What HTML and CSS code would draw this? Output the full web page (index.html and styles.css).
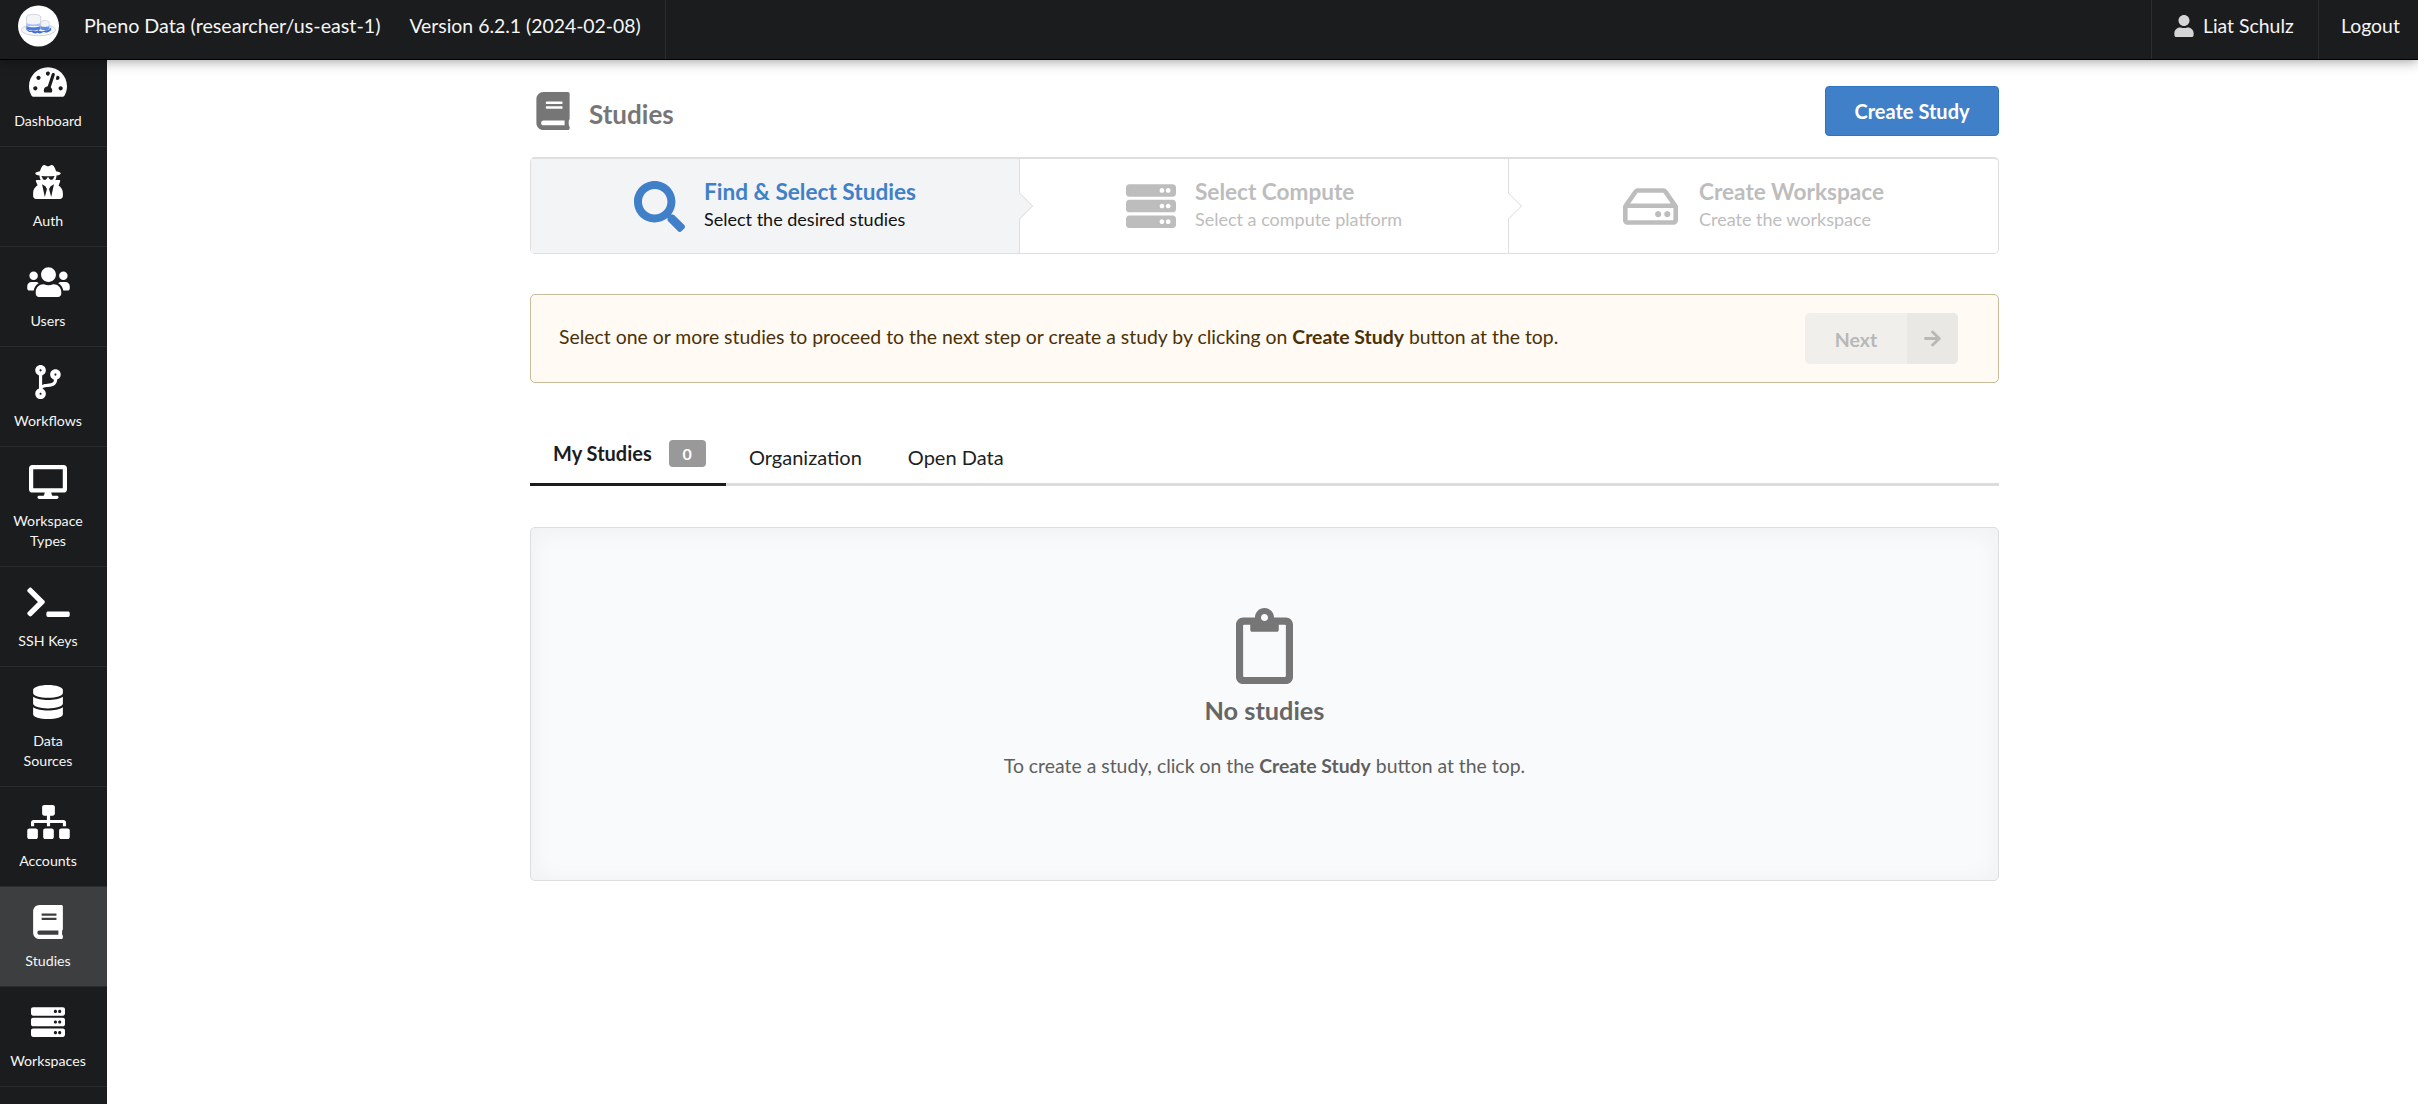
FILE: index.html
```html
<!DOCTYPE html>
<html>
<head>
	<title>Studies</title>
	<link rel="stylesheet" href="styles.css">
</head>
<body>
	<svg class="icon-defs" xmlns="http://www.w3.org/2000/svg">
		<symbol id="i-dashboard" viewBox="0 0 576 512"><path d="M288 32C128.94 32 0 160.94 0 320c0 52.8 14.25 102.26 39.06 144.8 5.61 9.62 16.3 15.2 27.44 15.2h443c11.14 0 21.83-5.58 27.44-15.2C561.75 422.26 576 372.8 576 320c0-159.06-128.94-288-288-288zm0 64c14.71 0 26.58 10.13 30.32 23.65-1.11 2.26-2.64 4.23-3.45 6.67l-9.22 27.67c-5.13 3.49-10.97 6.01-17.64 6.01-17.67 0-32-14.33-32-32S270.33 96 288 96zM96 384c-17.67 0-32-14.33-32-32s14.33-32 32-32 32 14.33 32 32-14.33 32-32 32zm48-160c-17.67 0-32-14.33-32-32s14.33-32 32-32 32 14.33 32 32-14.33 32-32 32zm246.77-72.41l-61.33 184C343.13 347.33 352 364.54 352 384c0 11.72-3.38 22.55-8.88 32H232.88c-5.5-9.45-8.88-20.28-8.88-32 0-33.94 26.5-61.43 59.9-63.59l61.34-184.01c4.17-12.56 17.73-19.45 30.36-15.17 12.57 4.19 19.35 17.79 15.17 30.36zm14.66 57.2l15.52-46.55c3.47-1.29 7.13-2.23 11.05-2.23 17.67 0 32 14.33 32 32s-14.33 32-32 32c-11.38-.01-20.89-6.28-26.57-15.22zM480 384c-17.67 0-32-14.33-32-32s14.33-32 32-32 32 14.33 32 32-14.33 32-32 32z"/></symbol>
		<symbol id="i-auth" viewBox="0 0 448 512"><path d="M383.9 308.3l23.9-62.6c4-10.5-3.7-21.7-15-21.7h-58.5c11-18.9 17.8-40.6 17.8-64v-.3c39.2-7.8 64-19.1 64-31.7 0-13.3-27.3-25.1-70.1-33-9.2-32.8-27-65.8-40.6-82.8-9.5-11.9-25.9-15.6-39.5-8.8l-27.6 13.8c-9 4.5-19.6 4.5-28.6 0L182.1 3.4c-13.6-6.8-30-3.1-39.5 8.8-13.5 17-31.4 50-40.6 82.8-42.7 7.9-70 19.7-70 33 0 12.6 24.8 23.9 64 31.7v.3c0 23.4 6.8 45.1 17.8 64H56.3c-11.5 0-19.2 11.7-14.7 22.3l25.8 60.2C27.3 329.8 0 372.7 0 422.4v44.8C0 491.9 20.1 512 44.8 512h358.4c24.7 0 44.8-20.1 44.8-44.8v-44.8c0-48.4-25.8-90.4-64.1-114.1zM176 480l-41.6-192 49.6 32 24 40-32 120zm96 0l-32-120 24-40 49.6-32L272 480zm41.7-298.5c-3.9 11.9-7 24.6-16.5 33.4-10.1 9.3-48 22.4-64-25-2.8-8.4-15.4-8.4-18.3 0-17 50.2-56 32.4-64 25-9.5-8.8-12.7-21.5-16.5-33.4-.8-2.5-6.3-5.7-6.3-5.8v-10.8c28.3 3.6 61 5.8 96 5.8s67.7-2.1 96-5.8v10.8c-.1.1-5.6 3.2-6.4 5.8z"/></symbol>
		<symbol id="i-users" viewBox="0 0 640 512"><path d="M96 224c35.3 0 64-28.7 64-64s-28.7-64-64-64-64 28.7-64 64 28.7 64 64 64zm448 0c35.3 0 64-28.7 64-64s-28.7-64-64-64-64 28.7-64 64 28.7 64 64 64zm32 32h-64c-17.6 0-33.5 7.1-45.1 18.6 40.3 22.1 68.9 62 75.1 109.4h66c17.7 0 32-14.3 32-32v-32c0-35.3-28.7-64-64-64zm-256 0c61.9 0 112-50.1 112-112S381.9 32 320 32 208 82.1 208 144s50.1 112 112 112zm76.8 32h-8.3c-20.8 10-43.9 16-68.5 16s-47.6-6-68.5-16h-8.3C179.6 288 128 339.6 128 403.2V432c0 26.5 21.5 48 48 48h288c26.5 0 48-21.5 48-48v-28.8c0-63.6-51.6-115.2-115.2-115.2zm-223.7-13.4C161.5 263.1 145.6 256 128 256H64c-35.3 0-64 28.7-64 64v32c0 17.7 14.3 32 32 32h65.9c6.3-47.4 34.9-87.3 75.2-109.4z"/></symbol>
		<symbol id="i-workflows" viewBox="0 0 384 512"><path d="M384 144c0-44.2-35.8-80-80-80s-80 35.8-80 80c0 36.4 24.3 67.1 57.5 76.8-.6 16.1-4.2 28.5-11 36.9-15.4 19.2-49.3 22.4-85.2 25.7-28.2 2.6-57.4 5.4-81.3 16.9v-144c32.5-10.2 56-40.5 56-76.3 0-44.2-35.8-80-80-80S0 35.8 0 80c0 35.8 23.5 66.1 56 76.3v199.3C23.5 365.9 0 396.2 0 432c0 44.2 35.8 80 80 80s80-35.8 80-80c0-34-21.2-63.1-51.2-74.6 3.1-5.2 7.8-9.8 14.9-13.4 16.2-8.2 40.4-10.4 66.1-12.8 42.2-3.9 90-8.4 118.2-43.4 14-17.4 21.1-39.8 21.6-67.9 31.6-10.8 54.4-40.7 54.4-75.9zM80 64c8.8 0 16 7.2 16 16s-7.2 16-16 16-16-7.2-16-16 7.2-16 16-16zm0 384c-8.8 0-16-7.2-16-16s7.2-16 16-16 16 7.2 16 16-7.2 16-16 16zm224-320c8.8 0 16 7.2 16 16s-7.2 16-16 16-16-7.2-16-16 7.2-16 16-16z"/></symbol>
		<symbol id="i-desktop" viewBox="0 0 576 512"><path d="M528 0H48C21.5 0 0 21.5 0 48v320c0 26.5 21.5 48 48 48h192l-16 48h-72c-13.3 0-24 10.7-24 24s10.7 24 24 24h272c13.3 0 24-10.7 24-24s-10.7-24-24-24h-72l-16-48h192c26.5 0 48-21.5 48-48V48c0-26.5-21.5-48-48-48zm-16 352H64V64h448v288z"/></symbol>
		<symbol id="i-terminal" viewBox="0 0 640 512"><path d="M257.981 272.971L63.638 467.314c-9.373 9.373-24.569 9.373-33.941 0L7.029 444.647c-9.357-9.357-9.375-24.522-.04-33.901L161.011 256 6.99 101.255c-9.335-9.379-9.317-24.544.04-33.901l22.667-22.667c9.373-9.373 24.569-9.373 33.941 0L257.981 239.03c9.373 9.372 9.373 24.568 0 33.941zM640 456v-32c0-13.255-10.745-24-24-24H312c-13.255 0-24 10.745-24 24v32c0 13.255 10.745 24 24 24h304c13.255 0 24-10.745 24-24z"/></symbol>
		<symbol id="i-database" viewBox="0 0 448 512"><path d="M448 73.143v45.714C448 159.143 347.667 192 224 192S0 159.143 0 118.857V73.143C0 32.857 100.333 0 224 0s224 32.857 224 73.143zM448 176v102.857C448 319.143 347.667 352 224 352S0 319.143 0 278.857V176c48.125 33.143 136.208 48.572 224 48.572S399.874 209.143 448 176zm0 160v102.857C448 479.143 347.667 512 224 512S0 479.143 0 438.857V336c48.125 33.143 136.208 48.572 224 48.572S399.874 369.143 448 336z"/></symbol>
		<symbol id="i-sitemap" viewBox="0 0 640 512"><path d="M128 352H32c-17.67 0-32 14.33-32 32v96c0 17.67 14.33 32 32 32h96c17.67 0 32-14.33 32-32v-96c0-17.67-14.33-32-32-32zm-24-80h192v48h48v-48h192v48h48v-57.59c0-21.17-17.23-38.41-38.41-38.41H344v-64h40c17.67 0 32-14.33 32-32V32c0-17.67-14.33-32-32-32H256c-17.67 0-32 14.33-32 32v96c0 17.67 14.33 32 32 32h40v64H94.41C73.23 224 56 241.23 56 262.41V320h48v-48zm264 80h-96c-17.67 0-32 14.33-32 32v96c0 17.67 14.33 32 32 32h96c17.67 0 32-14.33 32-32v-96c0-17.67-14.33-32-32-32zm240 0h-96c-17.67 0-32 14.33-32 32v96c0 17.67 14.33 32 32 32h96c17.67 0 32-14.33 32-32v-96c0-17.67-14.33-32-32-32z"/></symbol>
		<symbol id="i-book" viewBox="0 0 448 512"><path d="M448 360V24c0-13.3-10.7-24-24-24H96C43 0 0 43 0 96v320c0 53 43 96 96 96h328c13.3 0 24-10.7 24-24v-16c0-7.5-3.5-14.3-8.9-18.7-4.2-15.4-4.2-59.3 0-74.7 5.4-4.3 8.9-11.1 8.9-18.6zM128 134c0-3.3 2.7-6 6-6h212c3.3 0 6 2.7 6 6v20c0 3.3-2.7 6-6 6H134c-3.3 0-6-2.7-6-6v-20zm0 64c0-3.3 2.7-6 6-6h212c3.3 0 6 2.7 6 6v20c0 3.3-2.7 6-6 6H134c-3.3 0-6-2.7-6-6v-20zm253.4 250H96c-17.7 0-32-14.3-32-32 0-17.6 14.4-32 32-32h285.4c-1.9 17.1-1.9 46.9 0 64z"/></symbol>
		<symbol id="i-server" viewBox="0 0 512 512"><path d="M480 160H32c-17.673 0-32-14.327-32-32V64c0-17.673 14.327-32 32-32h448c17.673 0 32 14.327 32 32v64c0 17.673-14.327 32-32 32zm-48-88c-13.255 0-24 10.745-24 24s10.745 24 24 24 24-10.745 24-24-10.745-24-24-24zm-64 0c-13.255 0-24 10.745-24 24s10.745 24 24 24 24-10.745 24-24-10.745-24-24-24zm112 248H32c-17.673 0-32-14.327-32-32v-64c0-17.673 14.327-32 32-32h448c17.673 0 32 14.327 32 32v64c0 17.673-14.327 32-32 32zm-48-88c-13.255 0-24 10.745-24 24s10.745 24 24 24 24-10.745 24-24-10.745-24-24-24zm-64 0c-13.255 0-24 10.745-24 24s10.745 24 24 24 24-10.745 24-24-10.745-24-24-24zm112 248H32c-17.673 0-32-14.327-32-32v-64c0-17.673 14.327-32 32-32h448c17.673 0 32 14.327 32 32v64c0 17.673-14.327 32-32 32zm-48-88c-13.255 0-24 10.745-24 24s10.745 24 24 24 24-10.745 24-24-10.745-24-24-24zm-64 0c-13.255 0-24 10.745-24 24s10.745 24 24 24 24-10.745 24-24-10.745-24-24-24z"/></symbol>
		<symbol id="i-search" viewBox="0 0 512 512"><path d="M505 442.7L405.3 343c-4.5-4.5-10.6-7-17-7H372c27.6-35.3 44-79.7 44-128C416 93.1 322.9 0 208 0S0 93.1 0 208s93.1 208 208 208c48.3 0 92.7-16.4 128-44v16.3c0 6.4 2.5 12.5 7 17l99.7 99.7c9.4 9.4 24.6 9.4 33.9 0l28.3-28.3c9.4-9.4 9.4-24.6.1-34zM208 336c-70.7 0-128-57.2-128-128 0-70.7 57.2-128 128-128 70.7 0 128 57.2 128 128 0 70.7-57.2 128-128 128z"/></symbol>
		<symbol id="i-hdd" viewBox="0 0 576 512"><path d="M567.403 235.642L462.323 84.589A48 48 0 0 0 422.919 64H153.081a48 48 0 0 0-39.404 20.589L8.597 235.642A48.001 48.001 0 0 0 0 263.054V400c0 26.51 21.49 48 48 48h480c26.51 0 48-21.49 48-48V263.054c0-9.801-3-19.366-8.597-27.412zM153.081 112h269.838l77.913 112H75.168l77.913-112zM528 400H48V272h480v128zm-32-64c0 17.673-14.327 32-32 32s-32-14.327-32-32 14.327-32 32-32 32 14.327 32 32zm-96 0c0 17.673-14.327 32-32 32s-32-14.327-32-32 14.327-32 32-32 32 14.327 32 32z"/></symbol>
		<symbol id="i-user" viewBox="0 0 448 512"><path d="M224 256c70.7 0 128-57.3 128-128S294.7 0 224 0 96 57.3 96 128s57.3 128 128 128zm89.6 32h-16.7c-22.2 10.2-46.9 16-72.9 16s-50.6-5.8-72.9-16h-16.7C60.2 288 0 348.2 0 422.4V464c0 26.5 21.5 48 48 48h352c26.5 0 48-21.5 48-48v-41.6c0-74.2-60.2-134.4-134.4-134.4z"/></symbol>
		<symbol id="i-arrow" viewBox="0 0 448 512"><path d="M190.5 66.9l22.2-22.2c9.4-9.4 24.6-9.4 33.9 0L441 239c9.4 9.4 9.4 24.6 0 33.9L246.6 467.3c-9.4 9.4-24.6 9.4-33.9 0l-22.2-22.2c-9.5-9.5-9.3-25 .4-34.3L311.4 296H24c-13.3 0-24-10.7-24-24v-32c0-13.3 10.7-24 24-24h287.4L190.9 101.2c-9.8-9.3-10-24.8-.4-34.3z"/></symbol>
		<symbol id="i-clipboard" viewBox="0 0 384 512"><path d="M336 64h-80c0-35.3-28.7-64-64-64s-64 28.7-64 64H48C21.5 64 0 85.5 0 112v352c0 26.5 21.5 48 48 48h288c26.5 0 48-21.5 48-48V112c0-26.5-21.5-48-48-48zM192 40c13.3 0 24 10.7 24 24s-10.7 24-24 24-24-10.7-24-24 10.7-24 24-24zm144 418c0 3.3-2.7 6-6 6H54c-3.3 0-6-2.7-6-6V118c0-3.3 2.7-6 6-6h42v36c0 6.6 5.4 12 12 12h168c6.6 0 12-5.4 12-12v-36h42c3.3 0 6 2.7 6 6z"/></symbol>
	</svg>

	<header class="topbar">
		<div class="brand">
			<svg class="logo" viewBox="0 0 42 42">
				<circle cx="21" cy="21" r="21" fill="#fff"/>
				<ellipse cx="21" cy="25" rx="17.500" ry="6" fill="#f7f8fa" stroke="#c4c8ce" stroke-width=".8"/>
				<path d="M8 22c3 4 5 5 7 3 2 2 4 2 6 0 2 2 5 2 7 0 2 1 4 0 6-3v3c-3 3-6 3-8 2-2 2-4 2-6 1-2 1-4 1-6-1-2 1-4-1-6-3z" fill="#3f6fd8"/>
				<path d="M8.700 12c0-4 14.600-4 14.600 0v12c-3 2-11.600 2-14.600 0z" fill="#f2f4f7" stroke="#b5bcc8" stroke-width=".6"/>
				<path d="M8.700 18c3 1.800 11.600 1.800 14.600 0v3H8.700z" fill="#a9c4f2"/>
				<path d="M8.700 21c3 1.800 11.600 1.800 14.600 0v3c-3 2-11.600 2-14.600 0z" fill="#4b7be0"/>
				<path d="M23.300 17.500c0-2.800 8.700-2.800 8.700 0V24c-2 1.600-6.700 1.600-8.700 0z" fill="#f2f4f7" stroke="#b5bcc8" stroke-width=".5"/>
				<path d="M23.300 21c2 1.200 6.700 1.200 8.700 0v3c-2 1.600-6.700 1.600-8.700 0z" fill="#5f8ce6"/>
			</svg>
			<span class="brand-name">Pheno Data (researcher/us-east-1)</span>
			<span class="brand-version">Version 6.2.1 (2024-02-08)</span>
		</div>
		<div class="topbar-spacer"></div>
		<div class="topbar-item topbar-user">
			<svg class="user-icon"><use href="#i-user"/></svg>
			Liat Schulz
		</div>
		<div class="topbar-item topbar-logout">Logout</div>
	</header>

	<div class="page">
		<nav class="sidebar">
			<div class="side-list">
				<a class="side-item"><svg class="side-icon w-576"><use href="#i-dashboard"/></svg><span>Dashboard</span></a>
				<a class="side-item"><svg class="side-icon w-448"><use href="#i-auth"/></svg><span>Auth</span></a>
				<a class="side-item"><svg class="side-icon w-640"><use href="#i-users"/></svg><span>Users</span></a>
				<a class="side-item"><svg class="side-icon w-384"><use href="#i-workflows"/></svg><span>Workflows</span></a>
				<a class="side-item"><svg class="side-icon w-576"><use href="#i-desktop"/></svg><span>Workspace<br>Types</span></a>
				<a class="side-item"><svg class="side-icon w-640"><use href="#i-terminal"/></svg><span>SSH Keys</span></a>
				<a class="side-item"><svg class="side-icon w-448"><use href="#i-database"/></svg><span>Data<br>Sources</span></a>
				<a class="side-item"><svg class="side-icon w-640"><use href="#i-sitemap"/></svg><span>Accounts</span></a>
				<a class="side-item active"><svg class="side-icon w-448"><use href="#i-book"/></svg><span>Studies</span></a>
				<a class="side-item"><svg class="side-icon w-512"><use href="#i-server"/></svg><span>Workspaces</span></a>
			</div>
		</nav>

		<main class="main">
			<div class="page-head">
				<div class="page-title">
					<svg class="title-icon"><use href="#i-book"/></svg>
					<h1>Studies</h1>
				</div>
				<button class="create-btn">Create Study</button>
			</div>

			<div class="steps">
				<div class="step active">
					<svg class="step-icon icon-search"><use href="#i-search"/></svg>
					<div class="step-text">
						<div class="step-title">Find &amp; Select Studies</div>
						<div class="step-desc">Select the desired studies</div>
					</div>
				</div>
				<div class="step">
					<svg class="step-icon icon-server"><use href="#i-server"/></svg>
					<div class="step-text">
						<div class="step-title">Select Compute</div>
						<div class="step-desc">Select a compute platform</div>
					</div>
				</div>
				<div class="step">
					<svg class="step-icon icon-hdd"><use href="#i-hdd"/></svg>
					<div class="step-text">
						<div class="step-title">Create Workspace</div>
						<div class="step-desc">Create the workspace</div>
					</div>
				</div>
			</div>

			<div class="notice">
				<p>Select one or more studies to proceed to the next step or create a study by clicking on <b>Create Study</b> button at the top.</p>
				<button class="next-btn" disabled>
					<span class="next-label">Next</span>
					<span class="next-arrow"><svg class="arrow-icon"><use href="#i-arrow"/></svg></span>
				</button>
			</div>

			<div class="tabs">
				<a class="tab active">My Studies <span class="badge">0</span></a>
				<a class="tab">Organization</a>
				<a class="tab">Open Data</a>
			</div>

			<div class="empty">
				<svg class="empty-icon"><use href="#i-clipboard"/></svg>
				<div class="empty-title">No studies</div>
				<p class="empty-text">To create a study, click on the <b>Create Study</b> button at the top.</p>
			</div>
		</main>
	</div>
</body>
</html>
```

FILE: styles.css
```css
/* page */
* {
	box-sizing: border-box;
}

html, body {
	height: 100%;
}

body {
	margin: 0;
	font-family: Lato, "Open Sans", Arial, sans-serif;
	font-size: 19.4px;
	line-height: 1.4;
	color: #212121;
	background: #fff;
	overflow: hidden;
}

.icon-defs {
	display: none;
}

/* top bar */
.topbar {
	display: flex;
	height: 60px;
	background: #1b1c1d;
	color: #f5f5f5;
	border-bottom: 1px solid #000;
	box-shadow: 0 1px 12px rgba(0, 0, 0, 0.4);
	position: relative;
	z-index: 2;
}

.brand {
	display: flex;
	align-items: center;
	width: 666px;
	padding: 0 0 8px 18px;
	border-right: 1px solid #2c2d2e;
}

.logo {
	width: 41px;
	height: 42px;
	margin-right: 25px;
}

.brand-name {
	margin-right: 29px;
	font-size: 19.7px;
}

.topbar-spacer {
	flex: 1;
}

.topbar-item {
	display: flex;
	align-items: center;
	padding: 0 0 8px 0;
	border-left: 1px solid #2c2d2e;
}

.topbar-user {
	width: 167px;
	padding-left: 22px;
}

.user-icon {
	width: 20px;
	height: 22px;
	margin-right: 9px;
	fill: #d5d5d5;
}

.topbar-logout {
	width: 100px;
	padding-left: 22px;
}

/* sidebar */
.page {
	display: flex;
	height: calc(100% - 60px);
}

.sidebar {
	width: 107px;
	flex-shrink: 0;
	background: #1b1c1d;
	overflow: hidden;
}

.side-list {
	margin-top: -13px;
}

.side-item {
	display: flex;
	flex-direction: column;
	align-items: center;
	padding: 18px 11px 15px 0;
	border-bottom: 1px solid #2a2b2c;
	color: #f5f5f5;
	font-size: 14.2px;
	line-height: 20px;
	text-align: center;
}

.side-item.active {
	background: #3d3e3f;
}

.side-icon {
	height: 34px;
	margin-bottom: 12px;
	fill: #fff;
}

.w-384 { width: 26px; }
.w-448 { width: 30px; }
.w-512 { width: 34px; }
.w-576 { width: 38px; }
.w-640 { width: 43px; }

/* main area */
.main {
	flex: 1;
	padding: 26px 0 0 423px;
}

.main > * {
	width: 1469px;
}

.page-head {
	display: flex;
	justify-content: space-between;
}

.page-title {
	display: flex;
	align-items: center;
}

.title-icon {
	width: 34px;
	height: 38px;
	margin: 0 19px 0 6px;
	fill: #767676;
}

h1 {
	margin: 7px 0 0;
	font-size: 26px;
	font-weight: 700;
	color: #767676;
}

.create-btn {
	width: 174px;
	height: 50px;
	border: 1px solid #2f74c0;
	border-radius: 4px;
	background: #4080c9;
	color: #fff;
	font: 700 20px Lato, sans-serif;
}

/* steps */
.steps {
	display: flex;
	height: 97px;
	margin-top: 21px;
	border: 1px solid #dedede;
	border-top-width: 2px;
	border-radius: 5px;
}

.step {
	position: relative;
	display: flex;
	align-items: center;
	justify-content: center;
	width: 489px;
	border-right: 1px solid #dedede;
	color: #bdbdbd;
}

.step:last-child {
	flex: 1;
	border-right: 0;
}

.step.active {
	background: #f3f4f5;
	color: #4080c9;
}

/* chevron on the divider between two steps */
.step:not(:last-child)::after {
	content: "";
	position: absolute;
	top: 50%;
	right: -1px;
	width: 22px;
	height: 22px;
	background: #fff;
	border: solid #dedede;
	border-width: 1px 1px 0 0;
	transform: translate(50%, -50%) rotate(45deg) scale(0.8);
}

.step.active::after {
	background: #f3f4f5;
}

.step-icon {
	fill: currentColor;
	flex-shrink: 0;
}

.icon-search {
	width: 51px;
	height: 51px;
	margin-right: 19px;
}

.icon-server {
	width: 50px;
	height: 50px;
	margin-right: 19px;
}

.icon-hdd {
	width: 55px;
	height: 49px;
	margin-right: 21px;
}

.step-text {
	padding-bottom: 3px;
}

.step-title {
	font-size: 22.6px;
	font-weight: 700;
	line-height: 28px;
}

.step-desc {
	font-size: 18px;
	line-height: 26px;
}

.step.active .step-desc {
	color: #111;
}

/* notice */
.notice {
	display: flex;
	align-items: center;
	justify-content: space-between;
	height: 89px;
	margin-top: 40px;
	padding: 0 40px 0 28px;
	background: #fffaf3;
	border: 1px solid #c9ba9b;
	border-radius: 5px;
	color: #4a3108;
}

.notice p {
	margin: 0 0 3px;
}

.next-btn {
	display: flex;
	width: 153px;
	height: 51px;
	padding: 0;
	border: 0;
	border-radius: 5px;
	overflow: hidden;
	background: #f0efec;
	color: #b8b8b6;
	font: 700 19.5px Lato, sans-serif;
}

.next-label {
	flex: 1;
	line-height: 54px;
}

.next-arrow {
	display: flex;
	align-items: center;
	justify-content: center;
	width: 51px;
	height: 100%;
	background: #e9e8e5;
}

.arrow-icon {
	width: 17px;
	height: 19px;
	fill: #b8b8b6;
}

/* tabs */
.tabs {
	display: flex;
	height: 103px;
	padding-top: 40px;
	border-bottom: 3px solid #dcdcdd;
	font-size: 20px;
}

.tab {
	display: flex;
	align-items: center;
	height: 63px;
	padding: 8px 23px 0;
	margin-bottom: -3px;
	border-bottom: 3px solid transparent;
	white-space: nowrap;
}

.tab.active {
	width: 196px;
	padding: 0 0 0 23px;
	font-weight: 700;
	color: #1b1c1d;
	border-bottom-color: #1b1c1d;
}

.badge {
	display: inline-block;
	flex-shrink: 0;
	width: 37px;
	height: 27px;
	margin-left: 17px;
	border-radius: 4px;
	background: #999;
	color: #fff;
	font-size: 16px;
	line-height: 27px;
	text-align: center;
}

/* empty state */
.empty {
	display: flex;
	flex-direction: column;
	align-items: center;
	height: 354px;
	margin-top: 41px;
	padding-top: 80px;
	background: #f9fafb;
	border: 1px solid #dcdee0;
	border-radius: 5px;
	box-shadow: inset 0 2px 25px rgba(34, 36, 38, 0.05);
}

.empty-icon {
	width: 57px;
	height: 76px;
	fill: #767676;
}

.empty-title {
	margin-top: 9px;
	font-size: 25.3px;
	font-weight: 700;
	color: #666;
}

.empty-text {
	margin: 24px 0 0;
	color: #5f5f5f;
}
```
